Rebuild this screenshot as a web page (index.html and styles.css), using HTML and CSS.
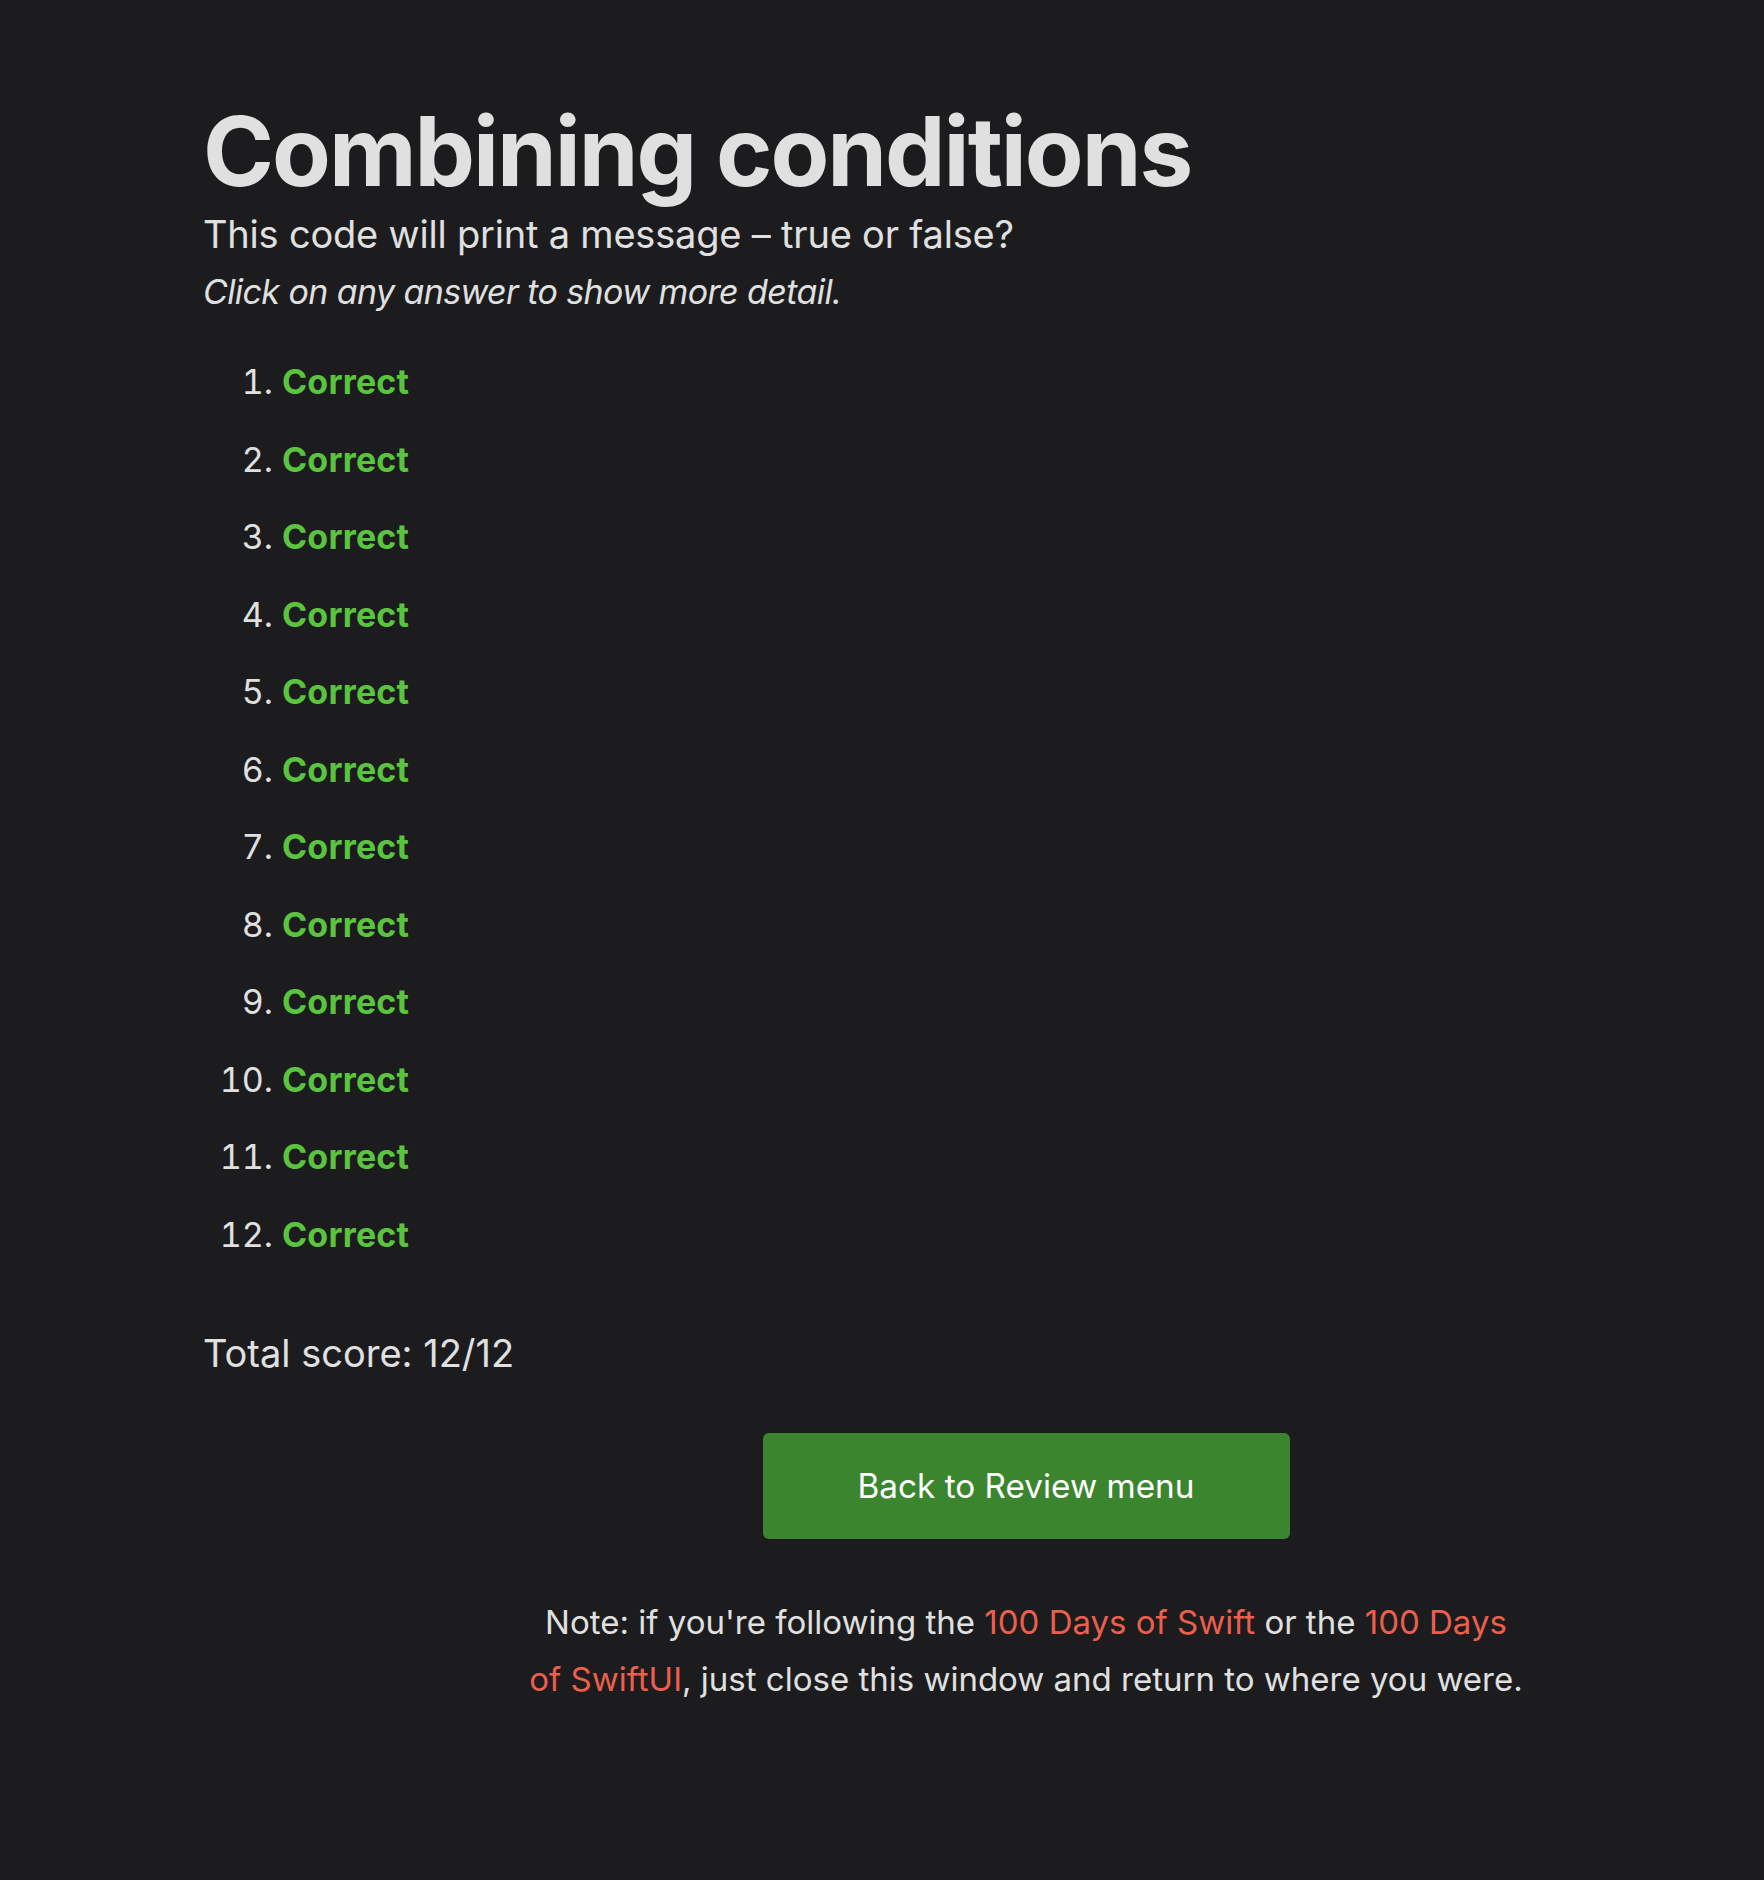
FILE: index.html
```html
<!DOCTYPE html>
<html lang="en">
<head>
<meta charset="utf-8">
<title>Combining conditions</title>
<link rel="stylesheet" href="styles.css">
</head>
<body>
<main class="page">
  <h1 class="title">Combining conditions</h1>
  <p class="subtitle">This code will print a message – true or false?</p>
  <p class="hint">Click on any answer to show more detail.</p>
  <ol class="answers">
    <li><span class="correct">Correct</span></li>
    <li><span class="correct">Correct</span></li>
    <li><span class="correct">Correct</span></li>
    <li><span class="correct">Correct</span></li>
    <li><span class="correct">Correct</span></li>
    <li><span class="correct">Correct</span></li>
    <li><span class="correct">Correct</span></li>
    <li><span class="correct">Correct</span></li>
    <li><span class="correct">Correct</span></li>
    <li><span class="correct">Correct</span></li>
    <li><span class="correct">Correct</span></li>
    <li><span class="correct">Correct</span></li>
  </ol>
  <p class="score">Total score: 12/12</p>
  <section class="footer">
    <a class="button" href="#">Back to Review menu</a>
    <p class="note">Note: if you're following the <a class="link" href="#">100 Days of Swift</a> or the <a class="link" href="#">100 Days of SwiftUI</a>, just close this window and return to where you were.</p>
  </section>
</main>
</body>
</html>
```
FILE: styles.css
```css
html, body {
  margin: 0;
  padding: 0;
  background: #1c1c1e;
}
body {
  color: #e0e0e0;
  font-family: Inter, "Noto Sans", "Liberation Sans", sans-serif;
  min-height: 1880px;
}
.page {
  padding: 98px 0 0 203px;
}
.title {
  margin: 0;
  font-size: 96px;
  line-height: 106px;
  font-weight: 700;
  letter-spacing: -2px;
}
.subtitle {
  margin: 6px 0 0;
  font-size: 38px;
  line-height: 48px;
  letter-spacing: -0.2px;
}
.hint {
  margin: 12px 0 0;
  font-size: 34px;
  line-height: 44px;
  font-style: italic;
  letter-spacing: -0.6px;
}
.answers {
  margin: 29px 0 0;
  padding-left: 79px;
  font-size: 34px;
  line-height: 77.5px;
}
.correct {
  color: #5ac43e;
  font-weight: 700;
  letter-spacing: 0.2px;
}
.score {
  margin: 57px 0 0;
  font-size: 38px;
  line-height: 46px;
}
.footer {
  margin: 57px 0 0 323px;
  width: 1000px;
  display: flex;
  flex-direction: column;
  align-items: center;
}
.button {
  display: flex;
  align-items: center;
  justify-content: center;
  width: 527px;
  height: 106px;
  background: #3b852f;
  border-radius: 6px;
  color: #ffffff;
  text-decoration: none;
  font-size: 33.3px;
}
.note {
  margin: 55px 0 0;
  text-align: center;
  font-size: 33px;
  line-height: 57px;
}
.link {
  color: #ec5f4c;
  text-decoration: none;
}
```
